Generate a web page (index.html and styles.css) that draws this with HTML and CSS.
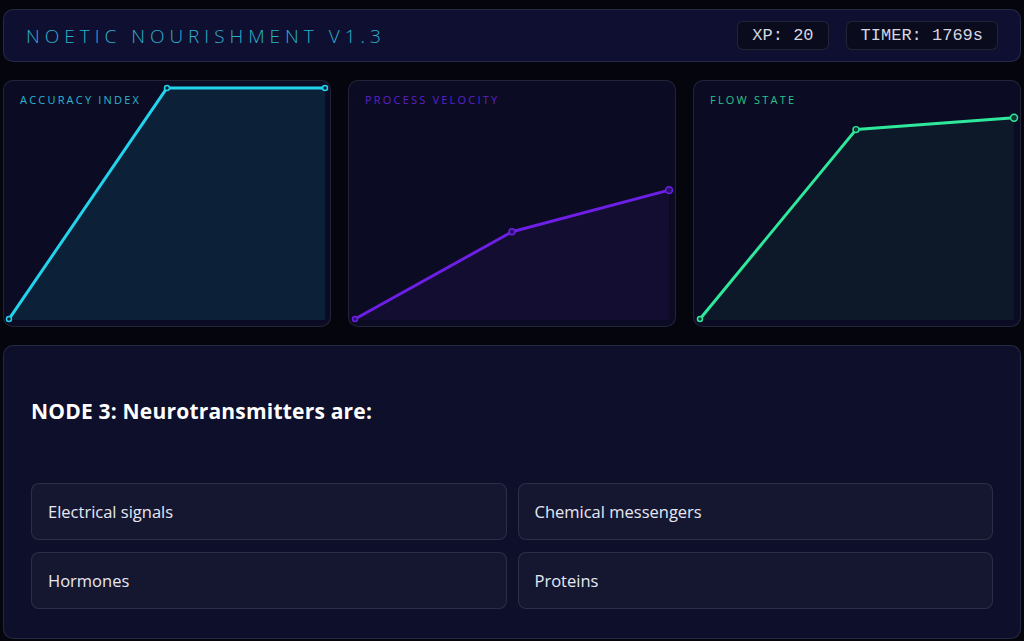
FILE: index.html
```html
<!DOCTYPE html>
<html lang="en">
<head>
    <meta charset="UTF-8">
    <meta name="viewport" content="width=device-width, initial-scale=1.0">
    <title>Noetic Nourishment</title>
    <link rel="stylesheet" href="styles.css">
</head>
<body>
 <div class="app">
    <div class="app-header">
        <div class="app-header__title">NOETIC NOURISHMENT V1.3</div>
        <div class="app-header__stats">
            <span class="app-stat">XP: 20</span>
            <span class="app-stat">TIMER: 1769s</span>
        </div>
    </div>

    <div class="app-charts">
        <div class="app-chart app-chart--cyan">
            <div class="app-chart__label">Accuracy Index</div>
            <svg class="app-chart__plot" viewBox="0 0 328 247" preserveAspectRatio="none">
                <polygon class="app-chart__area" points="5,240 164,7 323,7 323,241 5,241"/>
                <polyline class="app-chart__line" points="5,240 164,7 323,7"/>
                <circle class="app-chart__dot" cx="5" cy="240" r="2.5"/>
                <circle class="app-chart__dot" cx="164" cy="7" r="2.5"/>
                <circle class="app-chart__dot" cx="323" cy="7" r="2.5"/>
            </svg>
        </div>
        <div class="app-chart app-chart--violet">
            <div class="app-chart__label">Process Velocity</div>
            <svg class="app-chart__plot" viewBox="0 0 328 247" preserveAspectRatio="none">
                <polygon class="app-chart__area" points="6,240 164,152 322,110 322,241 6,241"/>
                <polyline class="app-chart__line" points="6,240 164,152 322,110"/>
                <circle class="app-chart__dot" cx="6" cy="240" r="2.5"/>
                <circle class="app-chart__dot" cx="164" cy="152" r="3"/>
                <circle class="app-chart__dot" cx="322" cy="110" r="3.5"/>
            </svg>
        </div>
        <div class="app-chart app-chart--green">
            <div class="app-chart__label">Flow State</div>
            <svg class="app-chart__plot" viewBox="0 0 328 247" preserveAspectRatio="none">
                <polygon class="app-chart__area" points="6,240 163,49 322,37 322,241 6,241"/>
                <polyline class="app-chart__line" points="6,240 163,49 322,37"/>
                <circle class="app-chart__dot" cx="6" cy="240" r="2.5"/>
                <circle class="app-chart__dot" cx="163" cy="49" r="3"/>
                <circle class="app-chart__dot" cx="322" cy="37" r="3.5"/>
            </svg>
        </div>
    </div>

    <div class="app-quiz">
        <h2 class="app-quiz__question">NODE 3: Neurotransmitters are:</h2>
        <div class="app-quiz__options">
            <button class="app-quiz__option">Electrical signals</button>
            <button class="app-quiz__option">Chemical messengers</button>
            <button class="app-quiz__option">Hormones</button>
            <button class="app-quiz__option">Proteins</button>
        </div>
    </div>
 </div>
</body>
</html>
```

FILE: styles.css
```css
html,
body {
    width: 100%;
    height: 100%;
}

body {
    margin: 0;
    padding: 9px 3px 0;
    box-sizing: border-box;
    color: #e4e6f0;
    font-family: "Open Sans", sans-serif;
    background: #05060d;
    -webkit-font-smoothing: antialiased;
}

.app {
    display: flex;
    flex-direction: column;
    gap: 18px;
}

.app-header {
    display: flex;
    align-items: center;
    justify-content: space-between;
    height: 53px;
    padding: 0 22px;
    box-sizing: border-box;
    border: 1px solid rgba(255, 255, 255, 0.1);
    border-radius: 10px;
    background: #0f1031;
}

.app-header__title {
    color: #2bb0cc;
    font-size: 19px;
    font-weight: 300;
    letter-spacing: 5px;
}

.app-header__stats {
    display: flex;
    gap: 17px;
}

.app-stat {
    padding: 4px 14px;
    color: #d4d6e0;
    font-family: "Liberation Mono", monospace;
    font-size: 17px;
    line-height: 19px;
    border: 1px solid rgba(255, 255, 255, 0.1);
    border-radius: 6px;
    background: #0a0b1c;
}

.app-charts {
    display: flex;
    gap: 17px;
}

.app-chart {
    position: relative;
    flex: 1;
    height: 247px;
    border: 1px solid rgba(255, 255, 255, 0.1);
    border-radius: 10px;
    box-sizing: border-box;
    background: #0b0c23;
    overflow: hidden;
}

.app-chart__label {
    position: absolute;
    top: 11px;
    left: 16px;
    font-size: 11px;
    letter-spacing: 2.2px;
    text-transform: uppercase;
}

.app-chart__plot {
    display: block;
    width: 100%;
    height: 100%;
}

.app-chart__line {
    fill: none;
    stroke-width: 3;
    stroke-linejoin: round;
}

.app-chart__dot {
    stroke-width: 1.5;
}

.app-chart--cyan .app-chart__label { color: #2ab8d2; }
.app-chart--cyan .app-chart__line { stroke: #22d3ee; }
.app-chart--cyan .app-chart__area { fill: rgba(34, 211, 238, 0.1); }
.app-chart--cyan .app-chart__dot { fill: #0d2038; stroke: #22d3ee; }

.app-chart--violet .app-chart__label { color: #5b21c8; }
.app-chart--violet .app-chart__line { stroke: #6d1fe6; }
.app-chart--violet .app-chart__area { fill: rgba(109, 31, 230, 0.08); }
.app-chart--violet .app-chart__dot { fill: #2a1270; stroke: #6d1fe6; }

.app-chart--green .app-chart__label { color: #27c48a; }
.app-chart--green .app-chart__line { stroke: #2ee89c; }
.app-chart--green .app-chart__area { fill: rgba(46, 232, 156, 0.06); }
.app-chart--green .app-chart__dot { fill: #0f3a34; stroke: #2ee89c; }

.app-quiz {
    height: 294px;
    padding: 48px 27px 0 27px;
    box-sizing: border-box;
    border: 1px solid rgba(255, 255, 255, 0.1);
    border-radius: 10px;
    background: #0e0f2b;
}

.app-quiz__question {
    margin: 0 0 54px;
    color: #fff;
    font-size: 21px;
    font-weight: 700;
    letter-spacing: 0.2px;
    line-height: 35px;
}

.app-quiz__options {
    display: grid;
    grid-template-columns: 1fr 1fr;
    gap: 12px 11px;
}

.app-quiz__option {
    height: 57px;
    padding: 0 16px;
    color: #e6e8f2;
    font-family: "Open Sans", sans-serif;
    font-size: 16.5px;
    text-align: left;
    border: 1px solid rgba(255, 255, 255, 0.1);
    border-radius: 8px;
    background: #151731;
    cursor: pointer;
}
```
